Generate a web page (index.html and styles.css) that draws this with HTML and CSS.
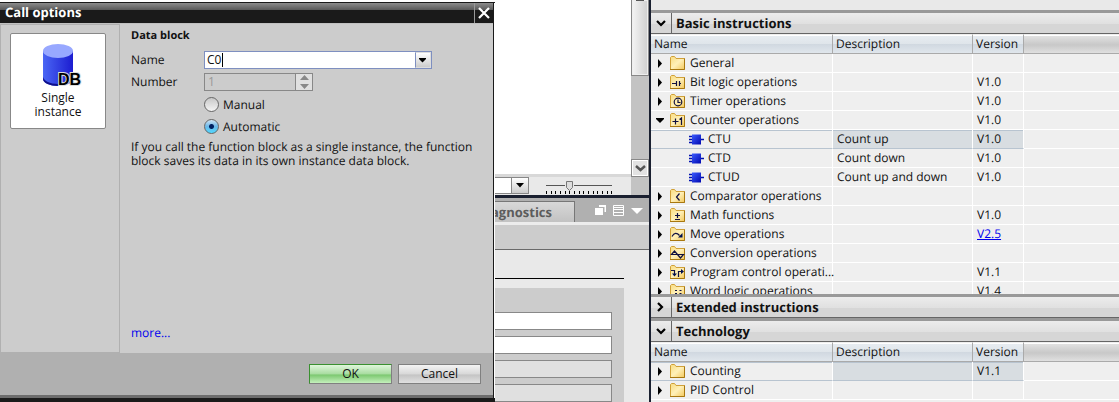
FILE: index.html
```html
<!DOCTYPE html>
<html lang="en">
<head>
<meta charset="utf-8">
<title>Call options</title>
<link rel="stylesheet" href="styles.css">
</head>
<body>
<svg class="defs" aria-hidden="true">
  <defs>
    <linearGradient id="folderFill" x1="0" y1="0" x2="1" y2="1"><stop offset="0" stop-color="#f8dc80"/><stop offset=".5" stop-color="#fff0b8"/><stop offset="1" stop-color="#f3c85c"/></linearGradient>
    <linearGradient id="blockFill" x1="0" y1="0" x2="1" y2="1"><stop offset="0" stop-color="#3c5cff"/><stop offset="1" stop-color="#0008b0"/></linearGradient>
    <linearGradient id="cylFill" x1="0" y1="0" x2="1" y2="0"><stop offset="0" stop-color="#4a66f4"/><stop offset="1" stop-color="#1c1cd0"/></linearGradient>
    <symbol id="folder" viewBox="0 0 15 14">
      <path d="M.5 13.500V1.500L1.500.5H4.500L6 2.500H14.500V13.500Z" fill="url(#folderFill)" stroke="#d0a038"/>
      <path d="M14.500 2.500V13.500H0" fill="none" stroke="#a87810"/>
    </symbol>
    <symbol id="tri" viewBox="0 0 8 9"><path d="M2 0V9L6 4.500Z"/></symbol>
    <symbol id="triDown" viewBox="0 0 8 9"><path d="M0 2H8V3L4 7L0 3Z"/></symbol>
    <symbol id="block" viewBox="0 0 15 11">
      <path d="M0 2.500H4M0 5.500H4M0 8.500H4M12 5.500H15" stroke="#0010b0" stroke-width="1.500"/>
      <path d="M3 .5H12V10.500H3Z" fill="url(#blockFill)"/>
    </symbol>
    <symbol id="chevDown" viewBox="0 0 10 10"><path d="M1 3L5 7L9 3" fill="none" stroke="#000" stroke-width="2.200"/></symbol>
    <symbol id="chevRight" viewBox="0 0 10 10"><path d="M2 1L6 5L2 9" fill="none" stroke="#000" stroke-width="2.200"/></symbol>
  </defs>
</svg>

<div class="workspace">
  <section class="editor">
    <div class="canvas"></div>
    <div class="vscroll">
      <div class="vthumb"><i></i></div>
      <button class="vdown" aria-label="Scroll down"><svg width="11" height="9" viewBox="0 0 11 9"><path d="M1 2L5.500 6L10 2" fill="none" stroke="#555" stroke-width="2.500"/></svg></button>
    </div>
    <div class="zoombar">
      <div class="zoomcombo"><button aria-label="Choose zoom"><svg width="8" height="5"><path d="M0 0H8L4 4.500Z"/></svg></button></div>
      <svg class="slider" width="68" height="17" viewBox="0 0 68 17">
        <path d="M1 8.500H67" stroke="#555"/>
        <path d="M1.500 14V17M6.500 14V17M10.500 14V17M15.500 14V17M20.500 14V17M24.500 14V17M29.500 14V17M34.500 14V17M38.500 14V17M43.500 14V17M48.500 14V17M52.500 14V17M57.500 14V17M62.500 14V17M66.500 14V17" stroke="#000"/>
        <path d="M20 3H29V12H20Z" fill="#e9e9e9"/>
        <path d="M21.500 4.500H27.500V10.500L24.500 13.500L21.500 10.500Z" fill="#ddd" stroke="#777"/>
      </svg>
    </div>
  </section>

  <section class="inspector">
    <div class="tabs">
      <div class="tab">Diagnostics</div>
      <svg class="winicons" width="50" height="13" viewBox="0 0 50 13">
        <path d="M4 1H11V8H9.500V3H4Z" fill="#fff"/><path d="M0 4H8V11H0Z" fill="#fff"/>
        <path d="M18.500 1.500H28.500V11.500H18.500ZM18 3.500H29M18 5.500H29M18 8.500H29" fill="none" stroke="#fff"/>
        <path d="M36 4H48L42 10Z" fill="#fff"/>
      </svg>
    </div>
    <div class="toolbar"></div>
    <div class="form">
      <hr>
      <div class="fields">
        <input aria-label="Field 1"><input aria-label="Field 2"><input aria-label="Field 3" disabled><input aria-label="Field 4" disabled>
      </div>
    </div>
  </section>
</div>

<aside class="library">
  <div class="libtop"></div>
  <section class="pane">
    <h2 class="bar"><button aria-label="Collapse"><svg width="10" height="10"><use href="#chevDown"/></svg></button><span>Basic instructions</span></h2>
    <table>
      <colgroup><col class="c-name"><col class="c-desc"><col class="c-ver"><col></colgroup>
      <thead><tr><th>Name</th><th>Description</th><th>Version</th><th></th></tr></thead>
      <tbody>
        <tr><td><div class="node"><svg class="tw"><use href="#tri"/></svg><svg class="ic"><use href="#folder"/></svg><span>General</span></div></td><td></td><td></td><td></td></tr>
        <tr><td><div class="node"><svg class="tw"><use href="#tri"/></svg><svg class="ic"><use href="#folder"/><path d="M2 8.500H6M6.500 6V11M9.500 6V11M10 8.500H11" class="g"/></svg><span>Bit logic operations</span></div></td><td></td><td>V1.0</td><td></td></tr>
        <tr><td><div class="node"><svg class="tw"><use href="#tri"/></svg><svg class="ic"><use href="#folder"/><circle cx="8" cy="8" r="3.800" class="g"/><path d="M8 5.500V8.500H10.500" class="g"/></svg><span>Timer operations</span></div></td><td></td><td>V1.0</td><td></td></tr>
        <tr><td><div class="node"><svg class="tw"><use href="#triDown"/></svg><svg class="ic"><use href="#folder"/><path d="M2.500 8.500H8.500M5.500 5.500V11.500M9.500 6.500L11.500 5V12" class="g"/></svg><span>Counter operations</span></div></td><td></td><td>V1.0</td><td></td></tr>
        <tr class="sel"><td><div class="node leaf"><svg class="fb"><use href="#block"/></svg><span>CTU</span></div></td><td>Count up</td><td>V1.0</td><td></td></tr>
        <tr><td><div class="node leaf"><svg class="fb"><use href="#block"/></svg><span>CTD</span></div></td><td>Count down</td><td>V1.0</td><td></td></tr>
        <tr><td><div class="node leaf"><svg class="fb"><use href="#block"/></svg><span>CTUD</span></div></td><td>Count up and down</td><td>V1.0</td><td></td></tr>
        <tr><td><div class="node"><svg class="tw"><use href="#tri"/></svg><svg class="ic"><use href="#folder"/><path d="M9.500 4.500L6.500 8L9.500 11.500" class="g"/></svg><span>Comparator operations</span></div></td><td></td><td></td><td></td></tr>
        <tr><td><div class="node"><svg class="tw"><use href="#tri"/></svg><svg class="ic"><use href="#folder"/><path d="M5 7.500H10M7.500 5V10M5 11.500H10" class="g"/></svg><span>Math functions</span></div></td><td></td><td>V1.0</td><td></td></tr>
        <tr><td><div class="node"><svg class="tw"><use href="#tri"/></svg><svg class="ic"><use href="#folder"/><path d="M2 9.500C4 5.500 7 5.500 9.500 8.500" class="g"/><path d="M12.500 6V10.500H8Z" fill="#001050"/></svg><span>Move operations</span></div></td><td></td><td><a href="#v25">V2.5</a></td><td></td></tr>
        <tr><td><div class="node"><svg class="tw"><use href="#tri"/></svg><svg class="ic"><use href="#folder"/><path d="M1.500 8.500L4.500 5L7.500 8.500ZM7.500 8.500L10.500 12L13.500 8.500Z" class="g"/></svg><span>Conversion operations</span></div></td><td></td><td></td><td></td></tr>
        <tr><td><div class="node"><svg class="tw"><use href="#tri"/></svg><svg class="ic"><use href="#folder"/><path d="M1 5.500H4.500V10M8.500 12V6.500H12" class="g"/><path d="M2 8.500H7L4.500 11.500ZM11 4V9L14 6.500Z" fill="#001050"/></svg><span>Program control operati...</span></div></td><td></td><td>V1.1</td><td></td></tr>
        <tr><td><div class="node"><svg class="tw"><use href="#tri"/></svg><svg class="ic"><use href="#folder"/><path d="M5 6.500H7M9.500 6.500H11.500M5 9.500H7M9.500 9.500H11.500" class="g"/></svg><span>Word logic operations</span></div></td><td></td><td>V1.4</td><td></td></tr>
      </tbody>
    </table>
  </section>
  <section class="pane">
    <h2 class="bar"><button aria-label="Expand"><svg width="10" height="10"><use href="#chevRight"/></svg></button><span>Extended instructions</span></h2>
  </section>
  <section class="pane">
    <h2 class="bar"><button aria-label="Collapse"><svg width="10" height="10"><use href="#chevDown"/></svg></button><span>Technology</span></h2>
    <table>
      <colgroup><col class="c-name"><col class="c-desc"><col class="c-ver"><col></colgroup>
      <thead><tr><th>Name</th><th>Description</th><th>Version</th><th></th></tr></thead>
      <tbody>
        <tr class="sel"><td><div class="node"><svg class="tw"><use href="#tri"/></svg><svg class="ic"><use href="#folder"/></svg><span>Counting</span></div></td><td></td><td>V1.1</td><td></td></tr>
        <tr><td><div class="node"><svg class="tw"><use href="#tri"/></svg><svg class="ic"><use href="#folder"/></svg><span>PID Control</span></div></td><td></td><td></td><td></td></tr>
      </tbody>
    </table>
  </section>
</aside>

<div class="dialog" role="dialog" aria-labelledby="dlg-title">
  <header class="titlebar">
    <h1 id="dlg-title">Call options</h1>
    <button aria-label="Close"><svg width="12" height="12" viewBox="0 0 12 12"><path d="M1 1L11 11M11 1L1 11" stroke="#fff" stroke-width="2.200"/></svg></button>
  </header>
  <div class="dlgbody">
    <nav class="kinds">
      <button class="kind">
        <svg width="44" height="46" viewBox="0 0 44 46">
          <path d="M4 8V36C4 40 11 43 19 43C27 43 34 40 34 36V8Z" fill="url(#cylFill)"/>
          <path d="M4 34V36C4 40 11 43 19 43V41C11 41 5 38 4 34Z" fill="#10108a"/>
          <ellipse cx="19" cy="8" rx="15" ry="7" fill="#98a8ff"/>
          <text x="19" y="42" class="dbtext">DB</text>
        </svg>
        <span>Single<br>instance</span>
      </button>
    </nav>
    <form class="options">
      <h3>Data block</h3>
      <div class="grid">
        <label for="name">Name</label>
        <div class="combo"><input id="name" value="C0"><i class="caret"></i><button type="button" aria-label="Show names"><svg width="8" height="5"><path d="M0 0H7V1L3.500 4.500L0 1Z"/></svg></button></div>
        <label for="number">Number</label>
        <div class="spin"><input id="number" value="1" disabled><span class="arrows"><svg width="9" height="14" viewBox="0 0 9 14"><path d="M0 5L4.500 0L9 5ZM0 9H9L4.500 14Z" fill="#888"/></svg></span></div>
      </div>
      <div class="radios">
        <label><input type="radio" name="mode">Manual</label>
        <label><input type="radio" name="mode" checked>Automatic</label>
      </div>
      <p>If you call the function block as a single instance, the function block saves its data in its own instance data block.</p>
      <a class="more" href="#more">more...</a>
    </form>
  </div>
  <footer class="actions"><button class="ok">OK</button><button>Cancel</button></footer>
</div>
</body>
</html>
```
FILE: styles.css
```css
* { box-sizing: border-box; }

body {
  margin: 0;
  height: 100vh;
  overflow: hidden;
  position: relative;
  display: grid;
  grid-template-columns: minmax(0, 58%) minmax(0, 1fr);
  grid-template-rows: minmax(0, 1fr);
  background: #1a2030;
  color: #111;
  font: 12px/14px "Open Sans", "Noto Sans", sans-serif;
  text-rendering: geometricPrecision;
}

button, input { font: inherit; color: inherit; margin: 0; padding: 0; border-radius: 0; }
button { display: flex; align-items: center; justify-content: center; }
.defs { position: absolute; width: 0; height: 0; }
svg { display: block; flex: none; }

/* Work area */
.workspace {
  display: grid;
  grid-template-rows: minmax(0, 195fr) minmax(0, 207fr);
}
.editor {
  display: grid;
  grid-template-columns: 1fr 18px;
  grid-template-rows: 1fr 21px;
}
.canvas { background: #fff; }
.vscroll {
  grid-row: span 2;
  background: #c3c3c3;
  display: flex;
  flex-direction: column;
  justify-content: space-between;
  padding-bottom: 18px;
}
.vthumb {
  height: 76px;
  border: 1px solid #888;
  border-top: 0;
  background: linear-gradient(90deg, #f4f4f4, #cfcfcf);
  box-shadow: inset 0 0 0 1px #eee;
}
.vthumb i { display: block; width: 8px; height: 1px; margin: 0 auto; background: #555; }
.vdown { width: 18px; height: 18px; border: 1px solid #888; background: #e2e2e2; box-shadow: inset 0 0 0 1px #fff; }
.zoombar {
  background: #e9e9e9;
  border-top: 3px solid #d8d8d8;
  display: flex;
  justify-content: flex-end;
  padding-right: 18px;
  gap: 16px;
}
.zoomcombo { width: 80px; height: 17px; border: 1px solid #888; background: #fff; display: flex; justify-content: flex-end; }
.zoomcombo button { width: 17px; border: 0; border-left: 1px solid #888; background: linear-gradient(#fff, #ccc); }

.inspector { border-top: 3px solid #1a2030; display: flex; flex-direction: column; background: #e9e9e9; }
.tabs {
  height: 24px;
  background: #b0b0b0;
  display: flex;
  justify-content: space-between;
  align-items: flex-end;
  padding-right: 4px;
}
.tab {
  width: 575px;
  height: 21px;
  padding-right: 22px;
  border: 1px solid #777;
  border-bottom: 0;
  background: linear-gradient(#d8d8d8, #c2c2c2);
  color: #5c5c5c;
  font-weight: 700;
  font-size: 13px;
  line-height: 20px;
  text-align: right;
}
.winicons { align-self: center; }
.toolbar { height: 28px; border-top: 3px solid #ececec; border-bottom: 1px solid #6a6a6a; background: #ccc; }
.form { flex: 1; min-height: 0; padding: 28px 25px 0 0; overflow: hidden; }
.form hr { margin: 0 0 9px; border: 0; height: 1px; background: #000; }
.fields { display: flex; flex-direction: column; gap: 6px; padding: 24px 12px 0 0; background: #ccc; }
.fields input { height: 18px; border: 1px solid #888; background: #fff; }
.fields input:disabled { background: #e0e0e0; }

/* Instruction library */
.library {
  display: grid;
  grid-template-rows: 10px minmax(0, 71fr) 24px minmax(0, 21fr);
  margin-left: 2px;
  background: #efefef;
}
.libtop { background: #e9e9e9; }
.pane { overflow: hidden; }
.bar {
  margin: 0;
  height: 24px;
  display: flex;
  border-top: 3px solid #999;
  border-bottom: 1px solid #666;
  background: linear-gradient(#ececec, #e0e0e0 55%, #d6d6d6 55%, #d6d6d6);
  font-size: 13px;
  line-height: 20px;
}
.bar button { width: 21px; border: 0; border-right: 1px solid #666; background: none; }
.bar span { padding-left: 4px; }

table { width: 100%; table-layout: fixed; border-collapse: separate; border-spacing: 0; }
.c-name { width: 182px; }
.c-desc { width: 140px; }
.c-ver { width: 51px; }
th {
  height: 20px;
  padding: 0 3px;
  border: solid #aaa;
  border-width: 1px 1px 1px 0;
  border-top-color: #eee;
  background: linear-gradient(#e8edf2, #dfe5ea 50%, #d0d8e0 50%, #e0e6ec);
  box-shadow: inset 0 1px #fff;
  font-weight: 400;
  text-align: left;
}
th:last-child { background: linear-gradient(#e4e4e4, #c8c8c8 55%, #e0e0e0); border-right: 0; }
td {
  height: 19px;
  padding: 0 4px;
  border-right: 1px solid #fff;
  border-bottom: 1px solid #fff;
  line-height: 18px;
  white-space: nowrap;
}
td:first-child { padding: 0 0 0 5px; }
td:last-child { border-right: 0; }
.sel td:not(:last-child) { border-bottom-color: #b8c4d0; box-shadow: inset 0 1px #b8c4d0; }
.sel td:nth-child(2), .sel td:nth-child(3) { background: #d8dde1; }
.node { display: flex; align-items: center; height: 18px; }
.tw { width: 8px; height: 9px; margin-right: 6px; }
.ic { width: 15px; height: 14px; margin-right: 5px; }
.fb { width: 15px; height: 11px; margin-right: 4px; }
.leaf { padding-left: 33px; }
.g { fill: none; stroke: #101040; stroke-width: 1.2; }
a { color: #00e; }

/* Dialog */
.dialog {
  position: absolute;
  left: 0;
  top: 2px;
  bottom: 0;
  width: 495px;
  display: flex;
  flex-direction: column;
  border: solid #1a1a1a;
  border-width: 1px 0 4px;
  box-shadow: inset -1px 0 #fff, inset -2px 0 #1a1a1a;
  padding-right: 2px;
  background: #ccc;
}
.titlebar {
  height: 20px;
  display: flex;
  justify-content: space-between;
  background: linear-gradient(#8c8c8c, #585858 7px, #1a1a1a 7px);
  color: #fff;
}
.titlebar h1 { margin: 0; padding-left: 5px; font-size: 13px; line-height: 19px; }
.titlebar button { width: 19px; border: 0; border-left: 1px solid #999; background: none; }
.dlgbody { flex: 1; display: flex; min-height: 0; border-top: 1px solid #c0c0c0; }
.kinds { width: 120px; border: 1px solid #b0b0b0; padding: 8px 9px; }
.kind {
  width: 96px;
  height: 96px;
  flex-direction: column;
  border: 1px solid #888;
  border-radius: 2px;
  background: #fff;
  gap: 2px;
}
.kind svg { margin-left: 6px; }
.dbtext { font: 700 16px "Liberation Sans", sans-serif; paint-order: stroke; stroke: #ddd; stroke-width: 2px; }
.options { flex: 1; display: flex; flex-direction: column; padding: 5px 16px 13px 11px; }
.options h3 { margin: 0 0 8px; font-size: 11px; line-height: 14px; }
.grid { display: grid; grid-template-columns: 73px 1fr; row-gap: 4px; align-items: center; }
.combo { position: relative; display: flex; width: 228px; height: 18px; border: 1px solid #7e8fc0; background: #fff; }
.combo input { flex: 1; min-width: 0; border: 0; padding-left: 2px; background: none; outline: 0; }
.combo button { width: 16px; border: 1px solid #ddd; border-left: 1px solid #7e8fc0; background: linear-gradient(#fff, #ccc); }
.caret { position: absolute; left: 17px; top: 1px; width: 1px; height: 14px; background: #000; }
.spin { display: flex; width: 109px; height: 18px; border: 1px solid #888; color: #999; }
.spin input { flex: 1; min-width: 0; border: 0; padding-left: 3px; background: none; }
.arrows { width: 17px; display: flex; align-items: center; justify-content: center; border-left: 1px solid #888; background: #e0e0e0; }
.radios { display: flex; flex-direction: column; gap: 7px; padding: 6px 0 0 73px; }
.radios label { display: flex; align-items: center; gap: 4px; }
.radios input {
  appearance: none;
  width: 15px;
  height: 15px;
  border: 1px solid #666;
  border-radius: 50%;
  background: linear-gradient(#c8c8c8, #f4f4f4);
}
.radios input:checked {
  background:
    radial-gradient(circle, #002060 2px, transparent 3px),
    linear-gradient(#d0e4f4, #6cb8e8 50%, #50d8ff);
}
.options p { margin: 6px 0 0; }
.more { margin-top: auto; text-decoration: none; }
.actions {
  height: 45px;
  display: flex;
  justify-content: flex-end;
  align-items: flex-start;
  gap: 6px;
  padding: 11px 12px 0 0;
  border-bottom: 3px solid #6c6c6c;
  background: #b0b0b0;
}
.actions button { width: 83px; height: 20px; border: 1px solid #808080; background: linear-gradient(#f4f4f4, #d8d8d8 50%, #c4c4c4 55%, #e0e0e0); }
.actions .ok { border-color: #3a9030 #808080 #808080 #3a9030; background: linear-gradient(#e0f6dc, #a8dca0 50%, #7cc870 55%, #c4f0bc); }
```
